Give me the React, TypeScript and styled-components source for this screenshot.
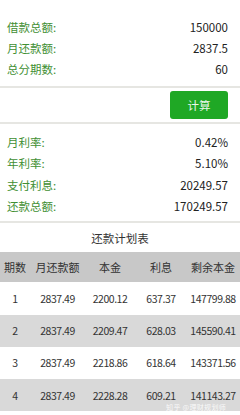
import React from "react"
import styled, { createGlobalStyle } from "styled-components"

const GlobalStyle = createGlobalStyle`
  html, body {
    margin: 0;
    padding: 0;
    background: #ffffff;
  }
  body {
    font-family: "Noto Sans CJK SC", "Noto Sans", sans-serif;
    color: #222222;
  }
`

const Page = styled.div`
  width: 240px;
  height: 415px;
  overflow: hidden;
  position: relative;
  background: #ffffff;
`

const Section = styled.div<{ $top: number; $bottom: number }>`
  padding: ${(p) => p.$top}px 12px ${(p) => p.$bottom}px 7px;
`

const InfoRow = styled.div`
  display: flex;
  justify-content: space-between;
  align-items: center;
  height: 21.4px;
  font-size: 11.5px;
`

const Label = styled.span`
  color: #3f8f33;
`

const Value = styled.span`
  color: #222222;
`

const Divider = styled.div`
  height: 2px;
  background: #e6e6e2;
`

const ButtonBar = styled.div`
  display: flex;
  justify-content: flex-end;
  padding: 2.5px 12px 3px 0;
`

const CalcButton = styled.button`
  width: 58px;
  height: 28px;
  border: none;
  border-radius: 3px;
  background: #1fa825;
  color: #eaf7ea;
  font-family: "Noto Sans CJK SC", sans-serif;
  font-size: 11.5px;
  padding: 0;
`

const Title = styled.div`
  height: 29px;
  display: flex;
  align-items: center;
  justify-content: center;
  font-size: 11.5px;
  color: #333333;
`

const columns = "30px 55px 50px 52px 52px"

const HeaderRow = styled.div`
  display: grid;
  grid-template-columns: ${columns};
  height: 30px;
  align-items: center;
  background: #c8c8c8;
  font-size: 11px;
  color: #333333;
  text-align: center;
  white-space: nowrap;
`

const DataRow = styled.div<{ $shade: boolean }>`
  display: grid;
  grid-template-columns: ${columns};
  height: 32.3px;
  align-items: center;
  background: ${(p) => (p.$shade ? "#d9d9d9" : "#ffffff")};
  font-size: 10.5px;
  color: #333333;
  text-align: center;
  white-space: nowrap;
`

const Cell = styled.span`
  letter-spacing: -0.45px;
`

const Watermark = styled.div`
  position: absolute;
  right: 14px;
  bottom: 3px;
  font-size: 7px;
  color: rgba(255, 255, 255, 0.85);
  letter-spacing: 0.3px;
`

const loanInfo = [
  { label: "借款总额:", value: "150000" },
  { label: "月还款额:", value: "2837.5" },
  { label: "总分期数:", value: "60" },
]

const result = [
  { label: "月利率:", value: "0.42%" },
  { label: "年利率:", value: "5.10%" },
  { label: "支付利息:", value: "20249.57" },
  { label: "还款总额:", value: "170249.57" },
]

const schedule = [
  ["1", "2837.49", "2200.12", "637.37", "147799.88"],
  ["2", "2837.49", "2209.47", "628.03", "145590.41"],
  ["3", "2837.49", "2218.86", "618.64", "143371.56"],
  ["4", "2837.49", "2228.28", "609.21", "141143.27"],
]

export default function App() {
  return (
    <Page>
      <GlobalStyle />
      <Section $top={16} $bottom={6}>
        {loanInfo.map((row) => (
          <InfoRow key={row.label}>
            <Label>{row.label}</Label>
            <Value>{row.value}</Value>
          </InfoRow>
        ))}
      </Section>
      <Divider />
      <ButtonBar>
        <CalcButton>计算</CalcButton>
      </ButtonBar>
      <Divider />
      <Section $top={7.5} $bottom={4.5}>
        {result.map((row) => (
          <InfoRow key={row.label}>
            <Label>{row.label}</Label>
            <Value>{row.value}</Value>
          </InfoRow>
        ))}
      </Section>
      <Divider />
      <Title>还款计划表</Title>
      <HeaderRow>
        <span>期数</span>
        <span>月还款额</span>
        <span>本金</span>
        <span>利息</span>
        <span>剩余本金</span>
      </HeaderRow>
      {schedule.map((row, i) => (
        <DataRow key={row[0]} $shade={i % 2 === 1}>
          {row.map((cell, j) => (
            <Cell key={j}>{cell}</Cell>
          ))}
        </DataRow>
      ))}
      <Watermark>知乎 @理财规划师</Watermark>
    </Page>
  )
}
